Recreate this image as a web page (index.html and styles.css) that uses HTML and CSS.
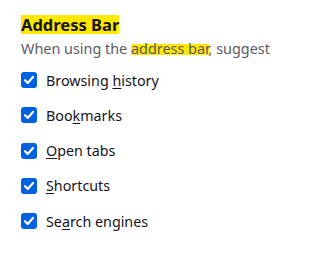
FILE: index.html
```html
<!DOCTYPE html>
<html>
<head>
<meta charset="utf-8">
<link rel="stylesheet" href="styles.css">
</head>
<body>
<section class="pane">
  <h2 class="title"><span class="hl">Address Bar</span></h2>
  <p class="desc">When using the <span class="hl-sm">address bar</span>, suggest</p>
  <ul class="opts">
    <li class="opt"><span class="cb"><svg viewBox="0 0 16 16" width="16" height="16"><path d="M4 8.2 L6.7 10.9 L12 4.9" fill="none" stroke="#fff" stroke-width="2.2" stroke-linecap="round" stroke-linejoin="round"/></svg></span><span class="lbl">Browsing <u>h</u>istory</span></li>
    <li class="opt"><span class="cb"><svg viewBox="0 0 16 16" width="16" height="16"><path d="M4 8.2 L6.7 10.9 L12 4.9" fill="none" stroke="#fff" stroke-width="2.2" stroke-linecap="round" stroke-linejoin="round"/></svg></span><span class="lbl">Boo<u>k</u>marks</span></li>
    <li class="opt"><span class="cb"><svg viewBox="0 0 16 16" width="16" height="16"><path d="M4 8.2 L6.7 10.9 L12 4.9" fill="none" stroke="#fff" stroke-width="2.2" stroke-linecap="round" stroke-linejoin="round"/></svg></span><span class="lbl"><u>O</u>pen tabs</span></li>
    <li class="opt"><span class="cb"><svg viewBox="0 0 16 16" width="16" height="16"><path d="M4 8.2 L6.7 10.9 L12 4.9" fill="none" stroke="#fff" stroke-width="2.2" stroke-linecap="round" stroke-linejoin="round"/></svg></span><span class="lbl"><u>S</u>hortcuts</span></li>
    <li class="opt"><span class="cb"><svg viewBox="0 0 16 16" width="16" height="16"><path d="M4 8.2 L6.7 10.9 L12 4.9" fill="none" stroke="#fff" stroke-width="2.2" stroke-linecap="round" stroke-linejoin="round"/></svg></span><span class="lbl">Se<u>a</u>rch engines</span></li>
  </ul>
</section>
</body>
</html>
```

FILE: styles.css
```css
html, body {
  margin: 0;
  padding: 0;
  background: #ffffff;
}
body {
  font-family: "Noto Sans", "Open Sans", sans-serif;
  color: #15141a;
}
.pane {
  padding: 15px 0 0 21px;
}
.title {
  margin: 0;
  font-size: 16.5px;
  font-weight: 700;
  line-height: 19px;
  height: 19px;
}
.hl {
  background: #ffe900;
  display: inline-block;
  line-height: 19px;
}
.desc {
  margin: 6px 0 0 0;
  font-size: 14.4px;
  line-height: 18px;
  color: #5b5b66;
}
.hl-sm {
  background: linear-gradient(#ffe900, #ffe900) 0 5px / 100% 11px no-repeat;
}
.opts {
  list-style: none;
  margin: 4.4px 0 0 0;
  padding: 0;
}
.opt {
  display: flex;
  align-items: center;
  height: 35.25px;
  font-size: 14.3px;
}
.cb {
  width: 16px;
  height: 16px;
  border-radius: 3px;
  background: #0061e0;
  display: flex;
  margin-right: 9px;
  flex: none;
}
.cb svg {
  display: block;
}
.lbl u {
  text-underline-offset: 2px;
}
```
